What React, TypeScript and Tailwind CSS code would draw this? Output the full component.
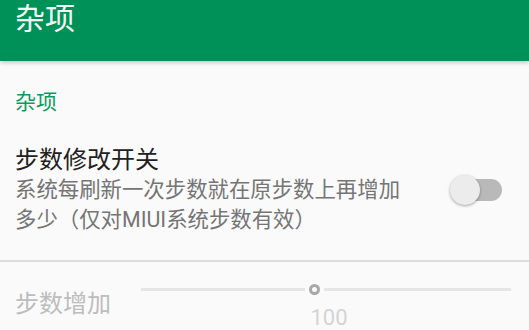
import React from 'react';

const font = { fontFamily: 'Roboto, "Noto Sans CJK SC", sans-serif' };

function Toggle() {
  return (
    <div className="relative w-[52px] h-[32px] shrink-0">
      <div className="absolute left-[7px] top-[5px] w-[45px] h-[22px] rounded-full bg-[#b9b9b9]" />
      <div className="absolute left-0 top-[1px] w-[30px] h-[30px] rounded-full bg-[#ececec] shadow-[0_1px_3px_rgba(0,0,0,0.35)]" />
    </div>
  );
}

function StepSlider() {
  return (
    <div className="flex-1 flex flex-col mr-[18px]">
      <div className="flex items-center h-[12px]">
        <div className="w-[164px] h-[3px] bg-[#e6e6e6]" />
        <div className="mx-[4px] w-[11px] h-[11px] rounded-full border-[3px] border-[#a8a8a8]" />
        <div className="flex-1 h-[3px] bg-[#e6e6e6]" />
      </div>
      <div className="text-center pl-[6px] text-[22px] leading-[30px] text-[#d4d4d4] mt-[8px]">100</div>
    </div>
  );
}

export default function App() {
  return (
    <div className="w-[529px] h-[330px] overflow-hidden bg-[#fafafa]" style={font}>
      <div className="h-[61px] bg-[#009159] px-[15px] shadow-[0_2px_4px_rgba(0,0,0,0.2)] relative">
        <div className="text-[30px] leading-[38px] text-[#f3f8f5]">杂项</div>
      </div>

      <div className="pt-[27px] px-[15px] text-[21px] leading-[28px] text-[#0b9a62]">杂项</div>

      <div className="flex items-start pl-[15px] pr-[27px] mt-[28px]">
        <div className="w-[395px]">
          <div className="text-[24px] leading-[32px] text-[#212121]">步数修改开关</div>
          <div className="text-[21.4px] leading-[30px] text-[#757575] -mt-[1px]">
            系统每刷新一次步数就在原步数上再增加多少（仅对MIUI系统步数有效）
          </div>
        </div>
        <div className="ml-auto mt-[30px]">
          <Toggle />
        </div>
      </div>

      <div className="h-[2px] bg-[#dcdcdc] mt-[25px]" />

      <div className="flex items-start pl-[15px] pt-[21px]">
        <div className="w-[126px] text-[24px] leading-[32px] text-[#bdbdbd] pt-[5px]">步数增加</div>
        <StepSlider />
      </div>
    </div>
  );
}
